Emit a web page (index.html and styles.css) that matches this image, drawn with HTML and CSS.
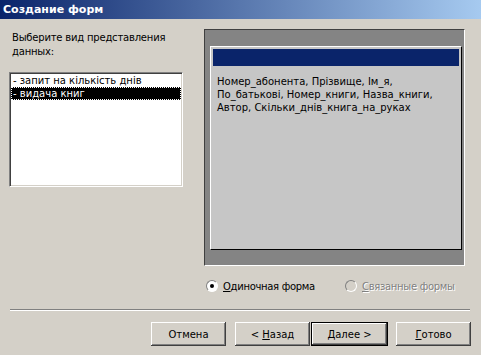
FILE: index.html
```html
<!DOCTYPE html>
<html lang="ru">
<head>
    <meta charset="UTF-8">
    <title>Создание форм</title>
    <link rel="stylesheet" href="styles.css">
</head>
<body>
    <div class="window">
        <div class="titlebar">Создание форм</div>
        <div class="top">
            <div class="left">
                <p class="prompt">Выберите вид представления<br>данных:</p>
                <ul class="listbox">
                    <li>- запит на кількість днів</li>
                    <li class="selected">- видача книг</li>
                </ul>
            </div>
            <div class="preview">
                <div class="form-sample">
                    <div class="form-header"></div>
                    <p class="fields">Номер_абонента, Прізвище, Ім_я, По_батькові, Номер_книги, Назва_книги, Автор, Скільки_днів_книга_на_руках</p>
                </div>
            </div>
        </div>
        <div class="radios">
            <label class="radio first"><span class="circle checked"></span><span><u>О</u>диночная форма</span></label>
            <label class="radio disabled"><span class="circle"></span><span><u>С</u>вязанные формы</span></label>
        </div>
        <div class="separator"></div>
        <div class="buttons">
            <button class="btn">Отмена</button>
            <button class="btn back">&lt; <u>Н</u>азад</button>
            <button class="btn default"><u>Д</u>алее &gt;</button>
            <button class="btn done"><u>Г</u>отово</button>
        </div>
    </div>
</body>
</html>
```

FILE: styles.css
```css
body {
    margin: 0;
    background-color: #d4d0c8;
    font-family: "DejaVu Sans", sans-serif;
    font-size: 10px;
    color: #000;
}
.window {
    width: 481px;
    height: 355px;
    overflow: hidden;
}
.titlebar {
    height: 19px;
    line-height: 19px;
    padding-left: 3px;
    background: linear-gradient(to right, #0a246a, #a6caf0);
    color: #fff;
    font-weight: bold;
    font-size: 11px;
}
.top {
    display: flex;
    padding: 10px 0 0 9px;
}
.left {
    width: 174px;
    margin-right: 21px;
}
.prompt {
    margin: 2px 0 0 3px;
    line-height: 14px;
    letter-spacing: -0.2px;
}
.listbox {
    list-style: none;
    margin: 13px 0 0 0;
    height: 111px;
    background-color: #fff;
    border: 1px solid;
    border-color: #808080 #fff #fff #808080;
    box-shadow: inset 1px 1px #404040, inset -1px -1px #d4d0c8;
    padding: 1px;
}
.listbox li {
    height: 13px;
    line-height: 13px;
    padding-left: 2px;
    white-space: nowrap;
}
.listbox li.selected {
    background-color: #000;
    color: #fff;
    outline: 1px dotted #fff;
    outline-offset: -1px;
}
.preview {
    width: 259px;
    height: 235px;
    background-color: #848484;
    border: 1px solid;
    border-color: #404040 #fff #fff #404040;
    display: flex;
    flex-direction: column;
}
.form-sample {
    flex: 1;
    margin: 16px 2px 15px 5px;
    background-color: #c6c6c6;
    border: 1px solid;
    border-color: #fff #000 #000 #fff;
    padding: 2px;
}
.form-header {
    height: 17px;
    background-color: #0a246a;
}
.fields {
    margin: 9px 2px 0 4px;
    line-height: 13px;
}
.radios {
    display: flex;
    padding: 13px 0 0 206px;
    height: 14px;
}
.radio {
    display: flex;
    align-items: center;
    gap: 5px;
    letter-spacing: -0.3px;
}
.radio.first {
    width: 139px;
}
.circle {
    width: 10px;
    height: 10px;
    border-radius: 50%;
    background-color: #fff;
    border: 1px solid;
    border-color: #808080 #fff #fff #808080;
    position: relative;
}
.circle.checked::after {
    content: "";
    position: absolute;
    left: 3px;
    top: 3px;
    width: 4px;
    height: 4px;
    border-radius: 50%;
    background-color: #000;
}
.radio.disabled .circle {
    background-color: #d4d0c8;
}
.radio.disabled span:last-child {
    color: #808080;
    text-shadow: 1px 1px #fff;
}
.separator {
    margin: 16px 11px 0 10px;
    border-top: 1px solid #808080;
    border-bottom: 1px solid #fff;
}
.buttons {
    display: flex;
    padding: 11px 0 0 151px;
}
.btn {
    width: 75px;
    height: 24px;
    padding: 0;
    font-family: "DejaVu Sans", sans-serif;
    font-size: 10px;
    color: #000;
    background-color: #d4d0c8;
    border: none;
    box-shadow: inset -1px -1px #404040, inset 1px 1px #fff, inset -2px -2px #808080, inset 2px 2px #d4d0c8;
}
.btn.back {
    margin-left: 9px;
}
.btn.default {
    width: 77px;
    border: 1px solid #000;
    margin-left: 1px;
}
.btn.done {
    margin-left: 8px;
}
```
